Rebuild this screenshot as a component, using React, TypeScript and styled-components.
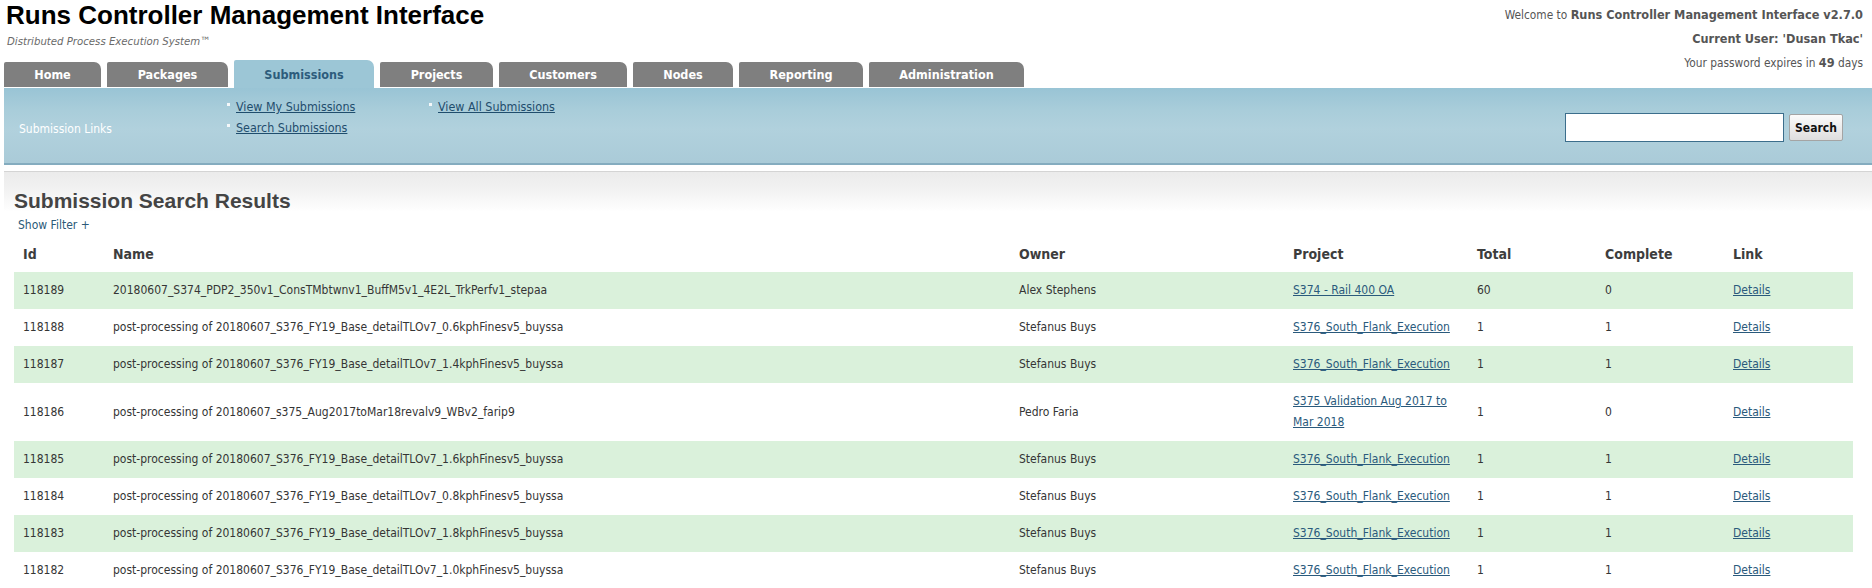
import React from "react";
import styled, { createGlobalStyle } from "styled-components";

const GlobalStyle = createGlobalStyle`
  html, body {
    margin: 0;
    padding: 0;
    background: #ffffff;
    overflow: hidden;
  }
  body {
    font-family: "DejaVu Sans Condensed", "DejaVu Sans", sans-serif;
    font-stretch: condensed;
    font-size: 12px;
    color: #333333;
  }
`;

const Page = styled.div`
  padding-left: 4px;
  width: 1868px;
`;

const TopBar = styled.header`
  display: flex;
  justify-content: space-between;
  align-items: flex-start;
  padding-right: 9px;
`;

const Brand = styled.div`
  display: flex;
  flex-direction: column;
`;

const Title = styled.h1`
  margin: 0;
  padding-left: 2px;
  font-family: "Liberation Sans", Arial, sans-serif;
  font-size: 26px;
  font-weight: bold;
  line-height: 30px;
  color: #000000;
`;

const Subtitle = styled.div`
  margin-top: 5px;
  padding-left: 3px;
  font-size: 11.3px;
  font-style: italic;
  line-height: 14px;
  color: #6a6a6a;
`;

const TabRow = styled.nav`
  display: flex;
  align-items: flex-start;
  gap: 6px;
  margin-top: 11px;
  height: 28px;
`;

const Tab = styled.a<{ $w: number; $active?: boolean }>`
  display: flex;
  align-items: center;
  justify-content: center;
  box-sizing: border-box;
  width: ${(p) => p.$w}px;
  height: ${(p) => (p.$active ? 28 : 25)}px;
  margin-top: ${(p) => (p.$active ? 0 : 2)}px;
  background: ${(p) => (p.$active ? "#9cc6d6" : "#7f7f7f")};
  color: ${(p) => (p.$active ? "#2d5c7c" : "#ffffff")};
  border-radius: 2px 7px 0 0;
  font-size: 12.5px;
  font-weight: bold;
  text-decoration: none;
  cursor: pointer;
`;

const UserInfo = styled.div`
  padding-top: 3px;
  text-align: right;
  font-size: 11.8px;
  color: #555555;
`;

const InfoLine = styled.div`
  height: 24px;
  line-height: 24px;
`;

const Strong = styled.b`
  font-size: 12.6px;
  font-weight: bold;
  line-height: 24px;
`;

const LinkBar = styled.section`
  display: flex;
  align-items: flex-start;
  height: 75px;
  background: linear-gradient(
    to bottom,
    #99c4d5 0%,
    #a9cdda 30%,
    #b1d1dd 55%,
    #aacbd8 100%
  );
  border-bottom: 2px solid #84acbf;
`;

const BarLabel = styled.div`
  box-sizing: border-box;
  width: 223px;
  padding: 31px 0 0 15px;
  line-height: 21px;
  font-size: 12px;
  color: #ffffff;
`;

const LinkList = styled.ul<{ $w: number }>`
  list-style: none;
  margin: 0;
  padding: 8px 0 0 0;
  width: ${(p) => p.$w}px;
`;

const LinkItem = styled.li`
  display: flex;
  align-items: flex-start;
  line-height: 21px;
  &::before {
    content: "";
    width: 3px;
    height: 3px;
    margin: 7px 6px 0 0;
    background: #f4f8fa;
  }
`;

const BarLink = styled.a`
  color: #1f4d6d;
  text-decoration: underline;
  font-size: 12.4px;
  cursor: pointer;
`;

const SearchForm = styled.form`
  display: flex;
  align-items: center;
  gap: 5px;
  margin-left: auto;
  padding: 25px 29px 0 0;
`;

const SearchInput = styled.input`
  box-sizing: border-box;
  width: 219px;
  height: 29px;
  margin: 0;
  border: 1px solid #3c6e8c;
  background: #ffffff;
  outline: none;
`;

const SearchButton = styled.button`
  box-sizing: border-box;
  width: 54px;
  height: 27px;
  padding: 0;
  border: 1px solid #a4a4a4;
  border-radius: 2px;
  background: linear-gradient(to bottom, #fbfbfb, #dedede);
  font-family: "DejaVu Sans Condensed", "DejaVu Sans", sans-serif;
  font-stretch: condensed;
  font-size: 12px;
  font-weight: bold;
  color: #111111;
`;

const Results = styled.section`
  margin-top: 6px;
  border-top: 1px solid #d4d4d4;
  padding: 16px 19px 0 10px;
  background: linear-gradient(to bottom, #ebebeb 0px, #f2f2f2 18px, #ffffff 40px);
`;

const Heading = styled.h2`
  margin: 0;
  font-family: "Liberation Sans", Arial, sans-serif;
  font-size: 21px;
  font-weight: bold;
  line-height: 26px;
  color: #444444;
`;

const FilterLink = styled.a`
  display: block;
  margin: 2px 0 0 4px;
  line-height: 18px;
  font-size: 12px;
  color: #2b5a78;
  text-decoration: none;
  cursor: pointer;
`;

const Table = styled.table`
  margin-top: 2px;
  width: 1839px;
  table-layout: fixed;
  border-collapse: collapse;
`;

const Th = styled.th`
  padding: 8px 9px;
  text-align: left;
  font-size: 14px;
  font-weight: bold;
  line-height: 20px;
  color: #3d3d3d;
`;

const Row = styled.tr<{ $alt: boolean }>`
  background: ${(p) => (p.$alt ? "#daf1db" : "#ffffff")};
`;

const Td = styled.td`
  padding: 8px 9px;
  vertical-align: middle;
  line-height: 21px;
  font-size: 12px;
  color: #353535;
`;

const CellLink = styled.a`
  color: #2a5a7c;
  text-decoration: underline;
  cursor: pointer;
`;

const tabs = [
  { label: "Home", w: 97 },
  { label: "Packages", w: 121 },
  { label: "Submissions", w: 140, active: true },
  { label: "Projects", w: 113 },
  { label: "Customers", w: 128 },
  { label: "Nodes", w: 100 },
  { label: "Reporting", w: 124 },
  { label: "Administration", w: 155 },
];

const columns = [
  { label: "Id", w: 90 },
  { label: "Name", w: 906 },
  { label: "Owner", w: 274 },
  { label: "Project", w: 184 },
  { label: "Total", w: 128 },
  { label: "Complete", w: 128 },
  { label: "Link", w: 129 },
];

const flank = "S376_South_Flank_Execution";
const pp = (s: string) =>
  `post-processing of 20180607_S376_FY19_Base_detailTLOv7_${s}kphFinesv5_buyssa`;

const rows = [
  {
    id: "118189",
    name: "20180607_S374_PDP2_350v1_ConsTMbtwnv1_BuffM5v1_4E2L_TrkPerfv1_stepaa",
    owner: "Alex Stephens",
    project: "S374 - Rail 400 OA",
    total: "60",
    complete: "0",
  },
  { id: "118188", name: pp("0.6"), owner: "Stefanus Buys", project: flank, total: "1", complete: "1" },
  { id: "118187", name: pp("1.4"), owner: "Stefanus Buys", project: flank, total: "1", complete: "1" },
  {
    id: "118186",
    name: "post-processing of 20180607_s375_Aug2017toMar18revalv9_WBv2_farip9",
    owner: "Pedro Faria",
    project: "S375 Validation Aug 2017 to Mar 2018",
    total: "1",
    complete: "0",
  },
  { id: "118185", name: pp("1.6"), owner: "Stefanus Buys", project: flank, total: "1", complete: "1" },
  { id: "118184", name: pp("0.8"), owner: "Stefanus Buys", project: flank, total: "1", complete: "1" },
  { id: "118183", name: pp("1.8"), owner: "Stefanus Buys", project: flank, total: "1", complete: "1" },
  { id: "118182", name: pp("1.0"), owner: "Stefanus Buys", project: flank, total: "1", complete: "1" },
];

export default function App() {
  return (
    <>
      <GlobalStyle />
      <Page>
        <TopBar>
          <Brand>
            <Title>Runs Controller Management Interface</Title>
            <Subtitle>Distributed Process Execution System™</Subtitle>
            <TabRow>
              {tabs.map((t) => (
                <Tab key={t.label} $w={t.w} $active={t.active}>
                  {t.label}
                </Tab>
              ))}
            </TabRow>
          </Brand>
          <UserInfo>
            <InfoLine>
              Welcome to <Strong>Runs Controller Management Interface v2.7.0</Strong>
            </InfoLine>
            <InfoLine>
              <Strong>Current User: 'Dusan Tkac'</Strong>
            </InfoLine>
            <InfoLine>
              Your password expires in <Strong>49</Strong> days
            </InfoLine>
          </UserInfo>
        </TopBar>

        <LinkBar>
          <BarLabel>Submission Links</BarLabel>
          <LinkList $w={202}>
            <LinkItem>
              <BarLink>View My Submissions</BarLink>
            </LinkItem>
            <LinkItem>
              <BarLink>Search Submissions</BarLink>
            </LinkItem>
          </LinkList>
          <LinkList $w={220}>
            <LinkItem>
              <BarLink>View All Submissions</BarLink>
            </LinkItem>
          </LinkList>
          <SearchForm onSubmit={(e) => e.preventDefault()}>
            <SearchInput type="text" />
            <SearchButton type="submit">Search</SearchButton>
          </SearchForm>
        </LinkBar>

        <Results>
          <Heading>Submission Search Results</Heading>
          <FilterLink>Show Filter +</FilterLink>
          <Table>
            <colgroup>
              {columns.map((c) => (
                <col key={c.label} style={{ width: c.w }} />
              ))}
            </colgroup>
            <thead>
              <tr>
                {columns.map((c) => (
                  <Th key={c.label}>{c.label}</Th>
                ))}
              </tr>
            </thead>
            <tbody>
              {rows.map((r, i) => (
                <Row key={r.id} $alt={i % 2 === 0}>
                  <Td>{r.id}</Td>
                  <Td>{r.name}</Td>
                  <Td>{r.owner}</Td>
                  <Td>
                    <CellLink>{r.project}</CellLink>
                  </Td>
                  <Td>{r.total}</Td>
                  <Td>{r.complete}</Td>
                  <Td>
                    <CellLink>Details</CellLink>
                  </Td>
                </Row>
              ))}
            </tbody>
          </Table>
        </Results>
      </Page>
    </>
  );
}
